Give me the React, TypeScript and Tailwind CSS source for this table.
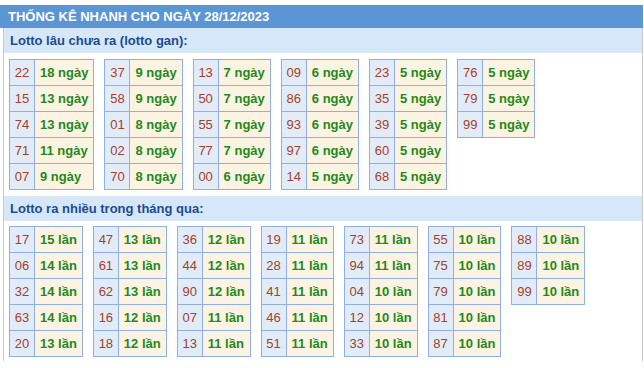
import React from "react";

type Row = [string, string];

const ganTables: Row[][] = [
  [["22", "18 ngày"], ["15", "13 ngày"], ["74", "13 ngày"], ["71", "11 ngày"], ["07", "9 ngày"]],
  [["37", "9 ngày"], ["58", "9 ngày"], ["01", "8 ngày"], ["02", "8 ngày"], ["70", "8 ngày"]],
  [["13", "7 ngày"], ["50", "7 ngày"], ["55", "7 ngày"], ["77", "7 ngày"], ["00", "6 ngày"]],
  [["09", "6 ngày"], ["86", "6 ngày"], ["93", "6 ngày"], ["97", "6 ngày"], ["14", "5 ngày"]],
  [["23", "5 ngày"], ["35", "5 ngày"], ["39", "5 ngày"], ["60", "5 ngày"], ["68", "5 ngày"]],
  [["76", "5 ngày"], ["79", "5 ngày"], ["99", "5 ngày"]],
];

const nhieuTables: Row[][] = [
  [["17", "15 lần"], ["06", "14 lần"], ["32", "14 lần"], ["63", "14 lần"], ["20", "13 lần"]],
  [["47", "13 lần"], ["61", "13 lần"], ["62", "13 lần"], ["16", "12 lần"], ["18", "12 lần"]],
  [["36", "12 lần"], ["44", "12 lần"], ["90", "12 lần"], ["07", "11 lần"], ["13", "11 lần"]],
  [["19", "11 lần"], ["28", "11 lần"], ["41", "11 lần"], ["46", "11 lần"], ["51", "11 lần"]],
  [["73", "11 lần"], ["94", "11 lần"], ["04", "10 lần"], ["12", "10 lần"], ["33", "10 lần"]],
  [["55", "10 lần"], ["75", "10 lần"], ["79", "10 lần"], ["81", "10 lần"], ["87", "10 lần"]],
  [["88", "10 lần"], ["89", "10 lần"], ["99", "10 lần"]],
];

const LottoTable: React.FC<{ rows: Row[] }> = ({ rows }) => (
  <table className="border-collapse">
    <tbody>
      {rows.map(([num, val], i) => (
        <tr key={i} className="h-[26px]">
          <td className="w-[25px] border border-[#8fb0e0] bg-[#e2ecf9] p-0 text-center text-[13px] text-[#a43f28]">
            {num}
          </td>
          <td className="border border-[#8fb0e0] bg-[#fdf3e3] px-[5px] py-0 text-left text-[13px] font-bold text-[#23891b]">
            {val}
          </td>
        </tr>
      ))}
    </tbody>
  </table>
);

const Section: React.FC<{ title: string; tables: Row[][]; top: string }> = ({ title, tables, top }) => (
  <div>
    <div className="flex h-[25px] items-center bg-[#d5e7f9] pl-[6px] text-[13px] font-bold text-[#1d4c8e]">
      {title}
    </div>
    <div className={`flex items-start gap-[10px] pl-[5px] ${top}`}>
      {tables.map((rows, i) => (
        <LottoTable key={i} rows={rows} />
      ))}
    </div>
  </div>
);

export default function App() {
  return (
    <div className="w-[644px] bg-white pt-[5px] font-['Liberation_Sans',Arial,sans-serif]">
      <div className="w-[643px]">
        <div className="flex h-[23px] items-center bg-[#5b95d4] pl-[8px] text-[13px] font-bold text-white">
          THỐNG KÊ NHANH CHO NGÀY 28/12/2023
        </div>
        <div className="ml-[3px] border-x border-[#c9c9c9] pb-[4px]">
          <Section title="Lotto lâu chưa ra (lotto gan):" tables={ganTables} top="pt-[6px] pb-[6px]" />
          <Section title="Lotto ra nhiều trong tháng qua:" tables={nhieuTables} top="pt-[5px]" />
        </div>
      </div>
    </div>
  );
}
